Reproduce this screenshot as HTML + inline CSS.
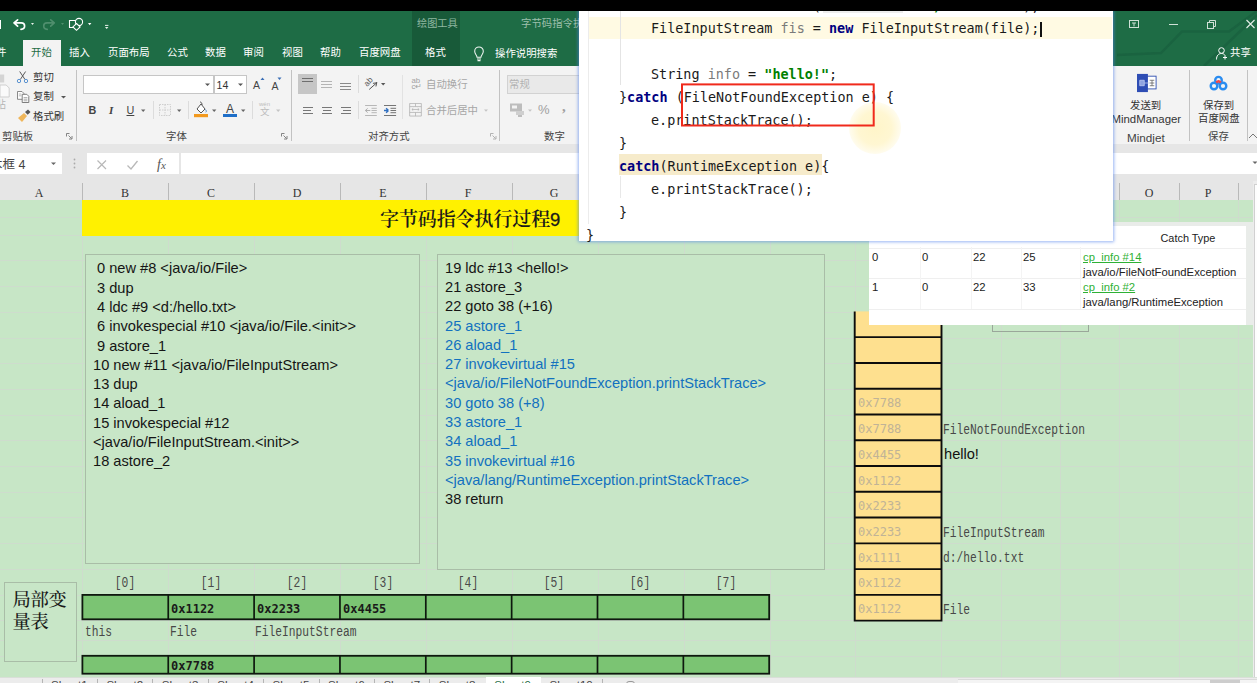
<!DOCTYPE html>
<html lang="zh">
<head>
<meta charset="utf-8">
<title>字节码指令执行过程9</title>
<style>
*{box-sizing:border-box;margin:0;padding:0}
html,body{width:1257px;height:683px;overflow:hidden;background:#c7e6c6}
body{position:relative;font-family:"Liberation Sans","Noto Sans CJK SC",sans-serif;font-size:10.5px;color:#222}
.abs{position:absolute}
.t{position:absolute;white-space:nowrap;line-height:1}
/* top */
#black{left:0;top:0;width:1257px;height:11px;background:#000}
#green{left:0;top:11px;width:1257px;height:55px;background:#1e6c45}
#toolctx{left:412px;top:11px;width:48px;height:55px;background:#185a39}
.tab{color:#fff;font-size:10.4px;top:48px}
#tabsel{left:23px;top:40px;width:38px;height:27px;background:#f3f3f3}
/* ribbon */
#ribbon{left:0;top:66px;width:1257px;height:78px;background:#f3f3f3}
.vsep{position:absolute;width:1px;background:#c2c2c2;top:70px;height:71px}
.rl{font-size:10.4px;color:#333}
.gl{font-size:10.4px;color:#444;top:132px}
.grey{color:#a6a6a6}
/* formula bar */
#fbar{left:0;top:144px;width:1257px;height:56px;background:#e6e6e6}
.wbox{position:absolute;background:#fff;top:153.3px;height:21px}
.colh{position:absolute;top:186.5px;font-family:"Liberation Serif","Noto Serif CJK SC",serif;font-size:12px;color:#333;line-height:1;width:20px;text-align:center}
.colsep{position:absolute;top:183px;height:17px;width:1px;background:#b9b9b9}
/* sheet */
#sheet{left:0;top:200px;width:1253px;height:478px;background:#c7e6c6;overflow:hidden}
.gv{position:absolute;top:0;width:1px;height:478px;background:#cedccd}
.gh{position:absolute;left:0;height:1px;width:1253px;background:#cedccd}
#yellow{left:82px;top:200px;width:1020px;height:35.500px;background:#fff100}
#title{left:380px;top:209.5px;font-family:"Liberation Serif","Noto Serif CJK SC",serif;font-weight:600;font-size:19px;color:#1a1a1a;letter-spacing:-0.1px}
.tbox{position:absolute;border:1px solid #a9bda7;background:#c8e6c7}
.code{position:absolute;font-family:"Liberation Sans",sans-serif;font-size:14.2px;line-height:19.3px;color:#151515;white-space:nowrap;transform-origin:0 0;transform:scaleX(1.03)}
.code .b{color:#1271bf}
.idx{position:absolute;top:575.800px;width:60px;margin-left:-10px;text-align:center;font-family:"Liberation Mono",monospace;font-size:14px;color:#4a4a4a;line-height:1;transform:scaleX(.81)}
.lv{position:absolute;background:#7bc473;border:2px solid #1d2b1c}
.hex{position:absolute;font-family:"DejaVu Sans Mono",monospace;font-weight:700;font-size:12px;color:#1a1a1a;line-height:1;white-space:nowrap}
.sun{position:absolute;font-family:"Liberation Mono",monospace;font-size:14px;color:#484848;line-height:1;white-space:nowrap;margin-top:-1.700px;margin-left:-.6px;transform-origin:0 0;transform:scaleX(.805)}
.stk{position:absolute;left:854px;width:88px;background:#fee08f;border:2px solid #111}
.shex{position:absolute;left:858px;font-family:"DejaVu Sans Mono",monospace;font-size:12px;color:#c0b397;line-height:1;white-space:nowrap}
/* popups */
#codepop{left:579px;top:11px;width:534px;height:230px;background:#fff;box-shadow:0 0 3px 1px rgba(80,130,235,.6);clip-path:inset(0 -8px -8px -8px)}
.cl{position:absolute;font-family:"DejaVu Sans Mono",monospace;font-size:13.45px;line-height:1;color:#1a1a1a;white-space:pre}
.kw{color:#000080;font-weight:700}
.str{color:#008000;font-weight:700}
.gr{color:#7a7a7a}
#expop{left:869px;top:222px;width:384px;height:103px;background:#e9ece9}
#exin{left:869px;top:226px;width:377px;height:98.500px;background:#fff}
.ex{position:absolute;font-family:"Liberation Sans",sans-serif;font-size:11.3px;color:#222;line-height:1;white-space:nowrap}
.lnk{color:#2eb135;text-decoration:underline}
#bottom{left:0;top:677px;width:1257px;height:6px;background:#ececec;border-top:1px solid #d9dfd8}
</style>
</head>
<body>
<div class="abs" id="black"></div>
<div class="abs" id="green"></div>
<div class="abs" id="toolctx"></div>
<!-- quick access toolbar -->
<div class="abs" style="left:0;top:19.500px;width:1px;height:9.500px;background:#fff"></div>
<svg class="abs" style="left:12px;top:15px" width="100" height="18" viewBox="0 0 100 18">
  <path d="M5.600 4.800 L2 7.900 L5.600 11.200 M2.400 7.900 H9.300 C13.600 7.900 13.900 14 9 14.400" fill="none" stroke="#fff" stroke-width="1.700" stroke-linecap="round" stroke-linejoin="round"/>
  <path d="M19 8 l3 0 l-1.5 2z" fill="#e8f0ea"/>
  <path d="M38.700 4.800 L42.300 7.900 L38.700 11.200 M41.900 7.900 H35 C30.700 7.900 30.400 14 35.300 14.400" fill="none" stroke="#4f8e6d" stroke-width="1.600" stroke-linecap="round" stroke-linejoin="round"/>
  <path d="M49 8 l3 0 l-1.5 2z" fill="#4f8e6d"/>
  <path d="M57.5 5.5 h9 v7 h-9z" fill="none" stroke="#fff" stroke-width="1.1"/>
  <circle cx="67" cy="7" r="3.6" fill="#1e6c45" stroke="#fff" stroke-width="1.1"/>
  <path d="M64.5 8.5 l3.6 3.4 l-3.6 3.4 l-3.6 -3.4z" fill="#1e6c45" stroke="#fff" stroke-width="1.1"/>
  <path d="M76 8 l3.4 0 l-1.7 2.2z" fill="#fff"/>
  <path d="M93 10.400 h3.400" stroke="#e8f0ea" stroke-width="1"/><path d="M93 12 h3.400 l-1.700 1.900z" fill="#e8f0ea"/>
</svg>
<span class="t" style="left:417px;top:19.400px;font-size:10.200px;color:#8fb7a1">绘图工具</span>
<span class="t" style="left:521px;top:19.4px;font-size:10.4px;color:#9dbfac">字节码指令执</span>
<!-- tabs -->
<div class="abs" id="tabsel"></div>
<span class="t tab" style="left:-14.5px">文件</span>
<span class="t tab" style="left:31px;color:#1e6c45">开始</span>
<span class="t tab" style="left:69px">插入</span>
<span class="t tab" style="left:108px">页面布局</span>
<span class="t tab" style="left:167px">公式</span>
<span class="t tab" style="left:205px">数据</span>
<span class="t tab" style="left:243px">审阅</span>
<span class="t tab" style="left:282px">视图</span>
<span class="t tab" style="left:320px">帮助</span>
<span class="t tab" style="left:359px">百度网盘</span>
<span class="t tab" style="left:425px">格式</span>
<svg class="abs" style="left:472.300px;top:44.800px" width="14" height="18" viewBox="0 0 14 18">
  <path d="M5 12.300 C5 10 2.700 9.300 2.700 6.200 a4.300 4.300 0 0 1 8.600 0 C11.300 9.300 9 10 9 12.300 z M5 14 h4 M5.500 15.600 h3" fill="none" stroke="#f2f7f4" stroke-width="1.050" stroke-linejoin="round"/>
</svg>
<span class="t tab" style="left:495px;top:49.300px">操作说明搜索</span>
<!-- window controls -->
<svg class="abs" style="left:1112px;top:11px" width="145" height="55" viewBox="0 0 145 55">
  <path d="M5 44 L49 42 L70 20.500 L117 20.500 L145 0" fill="none" stroke="#1a6340" stroke-width="2.500"/>
  <path d="M92 55 L145 4" fill="none" stroke="#1a6340" stroke-width="2.500"/>
  <rect x="17.500" y="9.500" width="9" height="7" fill="none" stroke="#cfe0d6" stroke-width="1"/>
  <path d="M20 12 h4 M22 12 v3.400" stroke="#cfe0d6" stroke-width="1"/>
  <path d="M57 13.500 h9" stroke="#cfe0d6" stroke-width="1"/>
  <rect x="95.500" y="11.500" width="6" height="6" fill="none" stroke="#cfe0d6" stroke-width="1"/>
  <path d="M97.500 11.500 v-2 h6 v6 h-2" fill="none" stroke="#cfe0d6" stroke-width="1"/>
  <path d="M134.500 9 l8 8 M142.500 9 l-8 8" stroke="#e6efe9" stroke-width="1.100"/>
  <circle cx="109.500" cy="39.500" r="2.800" fill="none" stroke="#fff" stroke-width="1"/>
  <path d="M104.500 48.500 c0 -4 2 -6 5 -6 c2 0 3 1 3.600 2 M111 46.500 h4 M113 44.500 v4" fill="none" stroke="#fff" stroke-width="1"/>
</svg>
<span class="t" style="left:1230px;top:48px;font-size:10.4px;color:#fff">共享</span>

<div class="abs" id="ribbon"></div>
<!-- clipboard group -->
<svg class="abs" style="left:0;top:70px" width="32" height="60" viewBox="0 0 32 60">
  <path d="M0 4.500 h4.200 v8 h-4.200z" fill="#d4d4d4"/>
  <path d="M0 15 h6.200 l3 3 v9 h-9.200z" fill="#fafafa" stroke="#cfcfcf" stroke-width="1"/>
</svg>
<span class="t rl" style="left:-15px;top:100px;color:#b5b5b5">粘贴</span>
<svg class="abs" style="left:15px;top:70px" width="16" height="16" viewBox="0 0 16 16">
  <path d="M4.700 1.500 L10 9.500 M10.600 1.500 L5.300 9.500" stroke="#5a5a5a" stroke-width="1" fill="none"/>
  <circle cx="4" cy="11" r="1.700" fill="none" stroke="#5b93d0" stroke-width="1"/>
  <circle cx="11" cy="11" r="1.700" fill="none" stroke="#5b93d0" stroke-width="1"/>
</svg>
<span class="t rl" style="left:33px;top:73.4px">剪切</span>
<svg class="abs" style="left:16px;top:89px" width="16" height="16" viewBox="0 0 16 16">
  <path d="M1.500 2.500 h4.500 l1.800 1.800 v6 h-6.300z" fill="#fff" stroke="#7d7d7d" stroke-width=".9"/>
  <path d="M2.800 5 h2.500 M2.800 6.800 h2.500" stroke="#9a9a9a" stroke-width=".7"/>
  <path d="M6.200 5.300 h4.600 l2 2 v6.200 h-6.600z" fill="#fff" stroke="#6f6f6f" stroke-width=".9"/>
  <path d="M7.600 8.600 h3.800 M7.600 10.200 h3.800 M7.600 11.800 h3.800" stroke="#8a8a8a" stroke-width=".7"/>
</svg>
<span class="t rl" style="left:33px;top:92.4px">复制</span>
<svg class="abs" style="left:60px;top:95px" width="8" height="5"><path d="M1 1 h5 l-2.5 2.6z" fill="#555"/></svg>
<svg class="abs" style="left:17px;top:109px" width="16" height="16" viewBox="0 0 16 16">
  <path d="M1 9 l6 -5 l3 3 l-5 6z" fill="#efb65a"/>
  <path d="M8 3 l3 -2.5 l2.5 2.5 l-2.8 2.8z" fill="#555"/>
</svg>
<span class="t rl" style="left:33px;top:112.4px">格式刷</span>
<span class="t gl" style="left:2px">剪贴板</span>
<svg class="abs" style="left:66px;top:133px" width="7" height="7"><path d="M.5 .5 h3 M.5 .5 v3 M6 3 v3 h-3 M2.5 2.5 l3 3" stroke="#777" stroke-width=".9" fill="none"/></svg>
<div class="vsep" style="left:76px"></div>
<!-- font group -->
<div class="abs" style="left:83px;top:75px;width:131px;height:19px;background:#fff;border:1px solid #c6c6c6"></div>
<div class="abs" style="left:214px;top:75px;width:33px;height:19px;background:#fff;border:1px solid #c6c6c6"></div>
<svg class="abs" style="left:204px;top:83px" width="8" height="5"><path d="M1 .5 h5 l-2.5 2.6z" fill="#555"/></svg>
<span class="t" style="left:216.5px;top:79.5px;font-size:10.6px;color:#333">14</span>
<svg class="abs" style="left:237px;top:83px" width="8" height="5"><path d="M1 .5 h5 l-2.5 2.6z" fill="#555"/></svg>
<span class="t" style="left:253px;top:80px;font-size:10.5px;color:#444">A</span>
<svg class="abs" style="left:260px;top:77px" width="6" height="4"><path d="M.5 3 l2 -2.4 l2 2.4z" fill="#3b6fb6"/></svg>
<span class="t" style="left:271.5px;top:80.5px;font-size:10.5px;color:#444">A</span>
<svg class="abs" style="left:277px;top:77px" width="6" height="4"><path d="M.5 .6 l2 2.4 l2 -2.4z" fill="#3b6fb6"/></svg>
<span class="t" style="left:88.500px;top:105px;font-size:10.800px;font-weight:700;color:#444">B</span>
<span class="t" style="left:109px;top:105px;font-size:11px;font-style:italic;font-family:'Liberation Serif',serif;font-weight:700;color:#444">I</span>
<span class="t" style="left:126.500px;top:105px;font-size:10.800px;text-decoration:underline;color:#444">U</span>
<svg class="abs" style="left:140px;top:109px" width="8" height="5"><path d="M1 .5 h4.4 l-2.2 2.4z" fill="#666"/></svg>
<div class="vsep" style="left:153px;top:101px;height:18px;background:#dcdcdc"></div>
<svg class="abs" style="left:158px;top:103px" width="14" height="14" viewBox="0 0 14 14"><path d="M1.5 1.5 h11 v11 h-11z M7 1.5 v11 M1.5 7 h11" fill="none" stroke="#cfcfcf" stroke-width="1" stroke-dasharray="1.5 1"/></svg>
<svg class="abs" style="left:176px;top:109px" width="8" height="5"><path d="M1 .5 h4.4 l-2.2 2.4z" fill="#666"/></svg>
<div class="vsep" style="left:188px;top:101px;height:18px;background:#dcdcdc"></div>
<svg class="abs" style="left:193px;top:101px" width="16" height="18" viewBox="0 0 16 18">
  <path d="M4 8 l4 -5 l4 5 l-4 4z" fill="#fff" stroke="#555" stroke-width="1"/>
  <path d="M7 1 c1.5 0 2 1.2 2 3" fill="none" stroke="#555" stroke-width="1"/>
  <path d="M12.5 8.5 c.8 1.2 1.2 2 .3 2.8" fill="none" stroke="#4a86c5" stroke-width="1"/>
  <rect x="1" y="13" width="14" height="3.2" fill="#f39a1f"/>
</svg>
<svg class="abs" style="left:211px;top:109px" width="8" height="5"><path d="M1 .5 h4.4 l-2.2 2.4z" fill="#666"/></svg>
<span class="t" style="left:226px;top:102.5px;font-size:12px;color:#444">A</span>
<div class="abs" style="left:223px;top:114px;width:14px;height:3px;background:#1f6fc8"></div>
<svg class="abs" style="left:240px;top:109px" width="8" height="5"><path d="M1 .5 h4.4 l-2.2 2.4z" fill="#666"/></svg>
<div class="vsep" style="left:252px;top:101px;height:18px;background:#dcdcdc"></div>
<span class="t" style="left:259px;top:101px;font-size:6px;color:#bcbcbc">wén</span>
<span class="t" style="left:260px;top:107px;font-size:9.5px;color:#bcbcbc">文</span>
<svg class="abs" style="left:275px;top:109px" width="8" height="5"><path d="M1 .5 h4.4 l-2.2 2.4z" fill="#c4c4c4"/></svg>
<span class="t gl" style="left:166px">字体</span>
<svg class="abs" style="left:281px;top:133px" width="7" height="7"><path d="M.5 .5 h3 M.5 .5 v3 M6 3 v3 h-3 M2.5 2.5 l3 3" stroke="#777" stroke-width=".9" fill="none"/></svg>
<div class="vsep" style="left:291px"></div>
<!-- alignment group -->
<div class="abs" style="left:298px;top:74px;width:19px;height:20px;background:#c6c6c6"></div>
<svg class="abs" style="left:298px;top:74px" width="70" height="46" viewBox="0 0 70 46">
  <path d="M4 4.500 h11 M4 7.500 h11" stroke="#6e6e6e" stroke-width="1"/>
  <path d="M23 7.500 h11 M23 10.500 h11 M23 13.500 h11" stroke="#b4b4b4" stroke-width="1"/>
  <path d="M42 9.500 h11 M42 12.500 h11 M42 15.500 h11" stroke="#8a8a8a" stroke-width="1"/>
  <path d="M5 33.500 h10 M5 36.500 h8 M5 39.500 h10" stroke="#777" stroke-width="1"/>
  <path d="M24 33.500 h10 M25 36.500 h8 M24 39.500 h10" stroke="#777" stroke-width="1"/>
  <path d="M43 33.500 h10 M45 36.500 h8 M43 39.500 h10" stroke="#777" stroke-width="1"/>
</svg>
<div class="vsep" style="left:358px;top:75px;height:18px;background:#dcdcdc"></div>
<div class="vsep" style="left:358px;top:101px;height:18px;background:#dcdcdc"></div>
<svg class="abs" style="left:363px;top:76px" width="26" height="16" viewBox="0 0 26 16">
  <text x="5.700" y="6.100" font-size="8.200" font-family="Liberation Sans,sans-serif" fill="#555" text-anchor="middle" dominant-baseline="middle" transform="rotate(-47 5.700 6.100)">ab</text>
  <path d="M6.500 13.200 L13.700 6.800 M13.700 6.800 l-3.400 .5 M13.700 6.800 l-.7 3.300" stroke="#555" stroke-width="1" fill="none" stroke-linecap="round"/>
  <path d="M18 7 h4.400 l-2.200 2.400z" fill="#555"/>
</svg>
<svg class="abs" style="left:364px;top:102px" width="36" height="16" viewBox="0 0 36 16">
  <path d="M1.100 3.500 h11.700 M7.500 6.300 h5.300 M7.500 8.500 h5.300 M7.500 10.700 h5.300 M1.100 13.500 h11.700" stroke="#b0b0b0" stroke-width=".9"/>
  <path d="M6.300 8.500 h-5 M1.300 8.500 l2.400 -2.100 M1.300 8.500 l2.400 2.100" stroke="#b0b0b0" stroke-width="1" fill="none"/>
  <path d="M20 3.500 h12.100 M26.500 6.300 h5.600 M26.500 8.500 h5.600 M26.500 10.700 h5.600 M20 13.500 h12.100" stroke="#666" stroke-width=".9"/>
  <path d="M20 8.500 h4.300 M24.500 8.500 l-2.400 -2.200 M24.500 8.500 l-2.400 2.200" stroke="#2f6fc0" stroke-width="1.400" fill="none"/>
</svg>
<div class="vsep" style="left:402px;top:75px;height:44px;background:#e2e2e2"></div>
<span class="t" style="left:411.500px;top:77.400px;font-size:7.800px;color:#a2a2a2">ab</span>
<span class="t" style="left:411.500px;top:83.200px;font-size:7.800px;color:#a2a2a2">c↵</span>
<span class="t rl grey" style="left:426px;top:80.4px">自动换行</span>
<svg class="abs" style="left:409px;top:103.300px" width="13" height="13.500" viewBox="0 0 14 15"><path d="M.5 .5 h13 v14 h-13z M.5 4 h13 M.5 10.500 h13 M7 .500 v3.500 M7 10.500 v4 M3 7.200 h8 M3 7.200 l1.500 -1.300 M3 7.200 l1.500 1.300 M11 7.200 l-1.500 -1.300 M11 7.200 l-1.500 1.300" fill="none" stroke="#b4b4b4" stroke-width=".9"/></svg>
<span class="t rl grey" style="left:426px;top:106.4px">合并后居中</span>
<svg class="abs" style="left:483px;top:109px" width="8" height="5"><path d="M1 .5 h4 l-2 2.200z" fill="#c4c4c4"/></svg>
<span class="t gl" style="left:368px">对齐方式</span>
<svg class="abs" style="left:490px;top:133px" width="7" height="7"><path d="M.5 .5 h3 M.5 .5 v3 M6 3 v3 h-3 M2.500 2.500 l3 3" stroke="#aaa" stroke-width=".9" fill="none"/></svg>
<div class="vsep" style="left:499px"></div>
<!-- number group -->
<div class="abs" style="left:507px;top:75px;width:80px;height:19px;background:#e9e9e9;border:1px solid #d2d2d2"></div>
<span class="t rl" style="left:509px;top:80.4px;color:#b2b2b2">常规</span>
<svg class="abs" style="left:509px;top:102px" width="18" height="16" viewBox="0 0 18 16"><rect x="1" y="1.500" width="12" height="8" fill="#bdbdbd"/><rect x="3" y="3.500" width="5" height="3" fill="#f3f3f3"/><path d="M7 9 h8 v4 h-8z" fill="#cfcfcf"/><path d="M9 13 h4 v2 h-4z" fill="#bdbdbd"/></svg>
<svg class="abs" style="left:527px;top:109px" width="8" height="5"><path d="M1 .5 h4 l-2 2.200z" fill="#c4c4c4"/></svg>
<span class="t" style="left:538px;top:103px;font-size:13px;color:#a0a0a0">%</span>
<span class="t" style="left:562px;top:98.500px;font-size:15px;font-weight:700;color:#a0a0a0;font-family:'Liberation Serif',serif">,</span>
<span class="t gl" style="left:544px">数字</span>
<!-- right side groups -->
<svg class="abs" style="left:1136px;top:72.500px" width="22" height="20" viewBox="0 0 24 22">
  <rect x="10" y="3.500" width="12" height="14" fill="#fff" stroke="#2f4fb0" stroke-width="1"/>
  <rect x="1" y="1" width="12" height="20" fill="#2e4db4"/>
  <path d="M4 8 h5 v6 h-5z M9 11 h6" fill="#8fa3e0" stroke="#c7d1f3" stroke-width=".8"/>
  <path d="M15 8 h5 M15 11 h5 M17.500 8 v6 M15 14 h5" stroke="#555" stroke-width=".8" fill="none"/>
</svg>
<span class="t rl" style="left:1130px;top:101.4px">发送到</span>
<span class="t rl" style="left:1111.500px;top:114.200px;font-size:11.400px">MindManager</span>
<span class="t gl" style="left:1127px;font-size:11.700px">Mindjet</span>
<div class="vsep" style="left:1189px"></div>
<svg class="abs" style="left:1207px;top:73px" width="24" height="20" viewBox="0 0 24 20">
  <circle cx="11.500" cy="7.200" r="3.300" fill="none" stroke="#2a8cf0" stroke-width="2.400"/>
  <circle cx="7" cy="13" r="3.300" fill="none" stroke="#2a8cf0" stroke-width="2.400"/>
  <circle cx="16" cy="13" r="3.300" fill="none" stroke="#2a8cf0" stroke-width="2.400"/>
  <path d="M9.300 9.600 q2.200 -2.600 4.400 0" fill="none" stroke="#ef4a4a" stroke-width="2.600"/>
</svg>
<span class="t rl" style="left:1203px;top:101.4px">保存到</span>
<span class="t rl" style="left:1198px;top:114.4px">百度网盘</span>
<span class="t gl" style="left:1208px">保存</span>
<div class="vsep" style="left:1247px"></div>
<svg class="abs" style="left:1248px;top:130px" width="9" height="9"><path d="M1 8 l4 -4 l4 4" fill="none" stroke="#777" stroke-width="1"/></svg>

<div class="abs" id="fbar"></div>
<div class="wbox" style="left:0;width:62px"></div>
<span class="t" style="left:-10px;top:158.500px;font-size:12.500px;color:#444">本框 4</span>
<svg class="abs" style="left:50px;top:162px" width="8" height="5"><path d="M1 .5 h5 l-2.5 2.600z" fill="#666"/></svg>
<svg class="abs" style="left:73px;top:158px" width="3" height="12"><circle cx="1.500" cy="1.500" r=".9" fill="#aaa"/><circle cx="1.500" cy="5.500" r=".9" fill="#aaa"/><circle cx="1.500" cy="9.500" r=".9" fill="#aaa"/></svg>
<div class="wbox" style="left:87px;width:92px"></div>
<svg class="abs" style="left:96px;top:159px" width="12" height="12"><path d="M1.500 1.500 l8.500 8.500 M10 1.500 l-8.500 8.500" stroke="#b8b8b8" stroke-width="1.200"/></svg>
<svg class="abs" style="left:126px;top:159px" width="13" height="12"><path d="M1.500 6.500 l3.500 3.500 l6.500 -8" fill="none" stroke="#b8b8b8" stroke-width="1.300"/></svg>
<span class="t" style="left:157px;top:157.500px;font-size:14px;font-style:italic;font-family:'Liberation Serif',serif;color:#555">f<span style="font-size:11px">x</span></span>
<div class="wbox" style="left:181px;width:1076px"></div>
<svg class="abs" style="left:1252px;top:161px" width="6" height="5"><path d="M.5 .5 h5 l-2.500 2.600z" fill="#666"/></svg>
<div class="colsep" style="left:82px"></div>
<div class="colsep" style="left:168px"></div>
<div class="colsep" style="left:254px"></div>
<div class="colsep" style="left:340px"></div>
<div class="colsep" style="left:426px"></div>
<div class="colsep" style="left:512px"></div>
<div class="colsep" style="left:1119px"></div>
<div class="colsep" style="left:1179px"></div>
<div class="colsep" style="left:1238px"></div>
<span class="colh" style="left:29px">A</span>
<span class="colh" style="left:115px">B</span>
<span class="colh" style="left:201px">C</span>
<span class="colh" style="left:287px">D</span>
<span class="colh" style="left:373px">E</span>
<span class="colh" style="left:458px">F</span>
<span class="colh" style="left:544px">G</span>
<span class="colh" style="left:1139px">O</span>
<span class="colh" style="left:1198px">P</span>
<div class="abs" style="left:1253px;top:181px;width:4px;height:496px;background:#ececec"></div>
<div class="abs" style="left:1254px;top:184px;width:3px;height:493px;background:#fdfdfd;border-left:1px solid #d0d0d0;border-top:1px solid #d0d0d0"></div>

<div class="abs" id="sheet">
<div class="gv" style="left:82px"></div>
<div class="gv" style="left:168px"></div>
<div class="gv" style="left:254px"></div>
<div class="gv" style="left:340px"></div>
<div class="gv" style="left:426px"></div>
<div class="gv" style="left:512px"></div>
<div class="gv" style="left:598px"></div>
<div class="gv" style="left:684px"></div>
<div class="gv" style="left:770px"></div>
<div class="gv" style="left:855px"></div>
<div class="gv" style="left:941px"></div>
<div class="gv" style="left:1001px"></div>
<div class="gv" style="left:1060px"></div>
<div class="gv" style="left:1119px"></div>
<div class="gv" style="left:1179px"></div>
<div class="gv" style="left:1238px"></div>
<div class="gh" style="top:17.0px"></div>
<div class="gh" style="top:34.7px"></div>
<div class="gh" style="top:60.4px"></div>
<div class="gh" style="top:86.1px"></div>
<div class="gh" style="top:111.8px"></div>
<div class="gh" style="top:137.5px"></div>
<div class="gh" style="top:163.2px"></div>
<div class="gh" style="top:188.9px"></div>
<div class="gh" style="top:214.6px"></div>
<div class="gh" style="top:240.3px"></div>
<div class="gh" style="top:266.0px"></div>
<div class="gh" style="top:291.7px"></div>
<div class="gh" style="top:317.4px"></div>
<div class="gh" style="top:343.1px"></div>
<div class="gh" style="top:368.8px"></div>
<div class="gh" style="top:394.5px"></div>
<div class="gh" style="top:420.2px"></div>
<div class="gh" style="top:439.500px"></div>
<div class="gh" style="top:456.300px"></div>
</div>
<div class="abs" id="yellow"></div>
<span class="t" id="title">字节码指令执行过程<span style="font-family:'Liberation Sans',sans-serif;font-weight:400;font-size:18.500px;-webkit-text-stroke:.3px #1a1a1a">9</span></span>
<div class="tbox" style="left:85px;top:254px;width:335px;height:310px"></div>
<div class="code" style="left:97px;top:259.3px">0 new #8 &lt;java/io/File&gt;</div>
<div class="code" style="left:97px;top:278.6px">3 dup</div>
<div class="code" style="left:97px;top:297.9px">4 ldc #9 &lt;d:/hello.txt&gt;</div>
<div class="code" style="left:97px;top:317.2px">6 invokespecial #10 &lt;java/io/File.&lt;init&gt;&gt;</div>
<div class="code" style="left:97px;top:336.5px">9 astore_1</div>
<div class="code" style="left:93px;top:355.8px">10 new #11 &lt;java/io/FileInputStream&gt;</div>
<div class="code" style="left:93px;top:375.1px">13 dup</div>
<div class="code" style="left:93px;top:394.4px">14 aload_1</div>
<div class="code" style="left:93px;top:413.7px">15 invokespecial #12</div>
<div class="code" style="left:93px;top:433.0px">&lt;java/io/FileInputStream.&lt;init&gt;&gt;</div>
<div class="code" style="left:93px;top:452.3px">18 astore_2</div>
<div class="tbox" style="left:437px;top:254px;width:388px;height:316px"></div>
<div class="code" style="left:445px;top:258.8px">19 ldc #13 &lt;hello!&gt;</div>
<div class="code" style="left:445px;top:278.1px">21 astore_3</div>
<div class="code" style="left:445px;top:297.3px">22 goto 38 (+16)</div>
<div class="code" style="color:#1271bf;left:445px;top:316.6px">25 astore_1</div>
<div class="code" style="color:#1271bf;left:445px;top:335.9px">26 aload_1</div>
<div class="code" style="color:#1271bf;left:445px;top:355.2px">27 invokevirtual #15</div>
<div class="code" style="color:#1271bf;left:445px;top:374.4px">&lt;java/io/FileNotFoundException.printStackTrace&gt;</div>
<div class="code" style="color:#1271bf;left:445px;top:393.7px">30 goto 38 (+8)</div>
<div class="code" style="color:#1271bf;left:445px;top:413.0px">33 astore_1</div>
<div class="code" style="color:#1271bf;left:445px;top:432.2px">34 aload_1</div>
<div class="code" style="color:#1271bf;left:445px;top:451.5px">35 invokevirtual #16</div>
<div class="code" style="color:#1271bf;left:445px;top:470.8px">&lt;java/lang/RuntimeException.printStackTrace&gt;</div>
<div class="code" style="left:445px;top:490.0px">38 return</div>
<span class="idx" style="left:105px">[0]</span>
<span class="idx" style="left:191px">[1]</span>
<span class="idx" style="left:277px">[2]</span>
<span class="idx" style="left:363px">[3]</span>
<span class="idx" style="left:448px">[4]</span>
<span class="idx" style="left:534px">[5]</span>
<span class="idx" style="left:620px">[6]</span>
<span class="idx" style="left:706px">[7]</span>
<svg class="abs" style="left:0;top:0" width="1257" height="683" viewBox="0 0 1257 683">
<rect x="82.4" y="594.9" width="686.80" height="24.4" fill="#7bc473" stroke="#0e180e" stroke-width="1.8"/>
<path d="M168.25 594.9 V619.3 M254.10 594.9 V619.3 M339.95 594.9 V619.3 M425.80 594.9 V619.3 M511.65 594.9 V619.3 M597.50 594.9 V619.3 M683.35 594.9 V619.3" stroke="#0e180e" stroke-width="1.7" fill="none"/>
<rect x="82.4" y="655.8" width="686.80" height="17.9" fill="#7bc473" stroke="#0e180e" stroke-width="1.8"/>
<path d="M168.25 655.8 V673.7 M254.10 655.8 V673.7 M339.95 655.8 V673.7 M425.80 655.8 V673.7 M511.65 655.8 V673.7 M597.50 655.8 V673.7 M683.35 655.8 V673.7" stroke="#0e180e" stroke-width="1.7" fill="none"/>
<rect x="854.7" y="311.4" width="86.8" height="309.24" fill="#fee08f"/>
<path d="M854.7 311.4 V620.64 H941.5 V311.4" fill="none" stroke="#0c0c0c" stroke-width="1.9" stroke-linejoin="miter"/>
<path d="M854.7 337.17 H941.5 M854.7 362.94 H941.5 M854.7 388.71 H941.5 M854.7 414.48 H941.5 M854.7 440.25 H941.5 M854.7 466.02 H941.5 M854.7 491.79 H941.5 M854.7 517.56 H941.5 M854.7 543.33 H941.5 M854.7 569.10 H941.5 M854.7 594.87 H941.5" stroke="#0c0c0c" stroke-width="1.9" fill="none"/>
</svg>
<span class="hex" style="left:171px;top:602.6px">0x1122</span>
<span class="hex" style="left:257px;top:602.6px">0x2233</span>
<span class="hex" style="left:343px;top:602.6px">0x4455</span>
<span class="hex" style="left:171px;top:660px">0x7788</span>
<span class="sun" style="left:86px;top:626.5px">this</span>
<span class="sun" style="left:171px;top:626.5px">File</span>
<span class="sun" style="left:256px;top:626.5px">FileInputStream</span>
<div class="abs" style="left:4px;top:582px;width:73px;height:80px;border:1px solid #a9bda7;background:#c8e6c7"></div>
<div class="abs" style="left:12.500px;top:588.500px;font-family:'Liberation Serif','Noto Serif CJK SC',serif;font-weight:500;font-size:18.300px;line-height:22.500px;color:#1a1a1a;width:60px;letter-spacing:-.3px">局部变量表</div>
<span class="shex" style="top:397.4px">0x7788</span>
<span class="shex" style="top:423.1px">0x7788</span>
<span class="shex" style="top:448.8px">0x4455</span>
<span class="shex" style="top:474.5px">0x1122</span>
<span class="shex" style="top:500.2px">0x2233</span>
<span class="shex" style="top:525.9px">0x2233</span>
<span class="shex" style="top:551.6px">0x1111</span>
<span class="shex" style="top:577.3px">0x1122</span>
<span class="shex" style="top:603.0px">0x1122</span>
<span class="sun" style="left:944px;top:424.6px">FileNotFoundException</span>
<span class="sun" style="left:944px;top:527.4px">FileInputStream</span>
<span class="sun" style="left:944px;top:553.1px">d:/hello.txt</span>
<span class="sun" style="left:944px;top:604.5px">File</span>
<span class="t" style="left:944px;top:447.0px;font-size:14.200px;color:#111;font-family:'Liberation Sans',sans-serif;transform-origin:0 0;transform:scaleX(1.03)">hello!</span>
<div class="abs" style="left:992px;top:300px;width:97px;height:32px;border:1px solid #9aa79a"></div>

<div class="abs" id="expop"></div>
<div class="abs" id="exin"></div>
<div class="abs" style="left:869px;top:247.5px;width:377px;height:1px;background:#efefef"></div>
<div class="abs" style="left:869px;top:278px;width:377px;height:1px;background:#efefef"></div>
<div class="abs" style="left:869px;top:308.5px;width:377px;height:1px;background:#efefef"></div>
<div class="abs" style="left:920px;top:247px;width:1px;height:62px;background:#f4f4f4"></div>
<div class="abs" style="left:971px;top:247px;width:1px;height:62px;background:#f4f4f4"></div>
<div class="abs" style="left:1021px;top:247px;width:1px;height:62px;background:#f4f4f4"></div>
<div class="abs" style="left:1080px;top:247px;width:1px;height:62px;background:#f4f4f4"></div>
<span class="ex" style="left:1160.500px;top:232.800px;font-size:10.900px">Catch Type</span>
<span class="ex" style="left:872px;top:252px">0</span>
<span class="ex" style="left:922px;top:252px">0</span>
<span class="ex" style="left:973px;top:252px">22</span>
<span class="ex" style="left:1023px;top:252px">25</span>
<span class="ex lnk" style="left:1083px;top:252px">cp_info #14</span>
<span class="ex" style="left:1083px;top:267px">java/io/FileNotFoundException</span>
<span class="ex" style="left:872px;top:282px">1</span>
<span class="ex" style="left:922px;top:282px">0</span>
<span class="ex" style="left:973px;top:282px">22</span>
<span class="ex" style="left:1023px;top:282px">33</span>
<span class="ex lnk" style="left:1083px;top:282px">cp_info #2</span>
<span class="ex" style="left:1083px;top:297px">java/lang/RuntimeException</span>

<div class="abs" id="codepop"></div>
<div class="abs" style="left:588px;top:17px;width:524px;height:22px;background:#fffae3"></div>
<div class="abs" style="left:588px;top:11px;width:1px;height:213px;background:#ececec"></div>
<div class="abs" style="left:620px;top:11px;width:1px;height:74px;background:#e4e4e4"></div>
<div class="abs" style="left:620px;top:176px;width:1px;height:22px;background:#e8e8e8"></div>
<div class="abs" style="left:619px;top:154px;width:203px;height:21px;background:#f6ebcb"></div>
<div class="abs" style="left:849px;top:102px;width:52px;height:52px;border-radius:50%;background:radial-gradient(circle,rgba(255,240,175,.68) 0%,rgba(255,241,180,.6) 45%,rgba(255,243,190,.3) 68%,rgba(255,245,200,0) 88%)"></div>
<div class="abs" style="left:579px;top:11px;width:533px;height:3.500px;overflow:hidden"><div class="abs" style="left:244px;top:0;width:80px;height:2px;background:#ededed"></div><div class="cl" style="left:72px;top:-10.700px">File file = <span class="kw">new</span> File(</div><div class="cl" style="left:251px;top:-10.700px;font-size:11px;color:#8a8a8a">pathname:</div><div class="cl" style="left:331px;top:-10.700px"><span class="str">"d:/hello.txt"</span>);</div></div>
<div class="cl" style="left:651px;top:22.4px">FileInputStream <span class="gr">fis</span> = <span class="kw">new</span> FileInputStream(file);</div>
<div class="abs" style="left:1040px;top:22px;width:1.500px;height:15px;background:#111"></div>
<div class="cl" style="left:651px;top:68.4px">String <span class="gr">info</span> = <span class="str">"hello!"</span>;</div>
<div class="cl" style="left:619px;top:91.4px">}<span class="kw">catch</span> (FileNotFoundException e) {</div>
<div class="cl" style="left:651px;top:114.4px">e.printStackTrace();</div>
<div class="cl" style="left:619px;top:137.3px">}</div>
<div class="cl" style="left:619px;top:159.8px"><span class="kw">catch</span>(RuntimeException e){</div>
<div class="cl" style="left:651px;top:183.1px">e.printStackTrace();</div>
<div class="cl" style="left:619px;top:205.6px">}</div>
<div class="cl" style="left:586px;top:228.6px">}</div>
<svg class="abs" style="left:670px;top:75px" width="220" height="60" viewBox="670 75 220 60"><rect x="682" y="84.400" width="191.700" height="41.100" fill="none" stroke="#f02a1c" stroke-width="2"/></svg>
<div class="abs" id="bottom"></div>
<div class="abs" style="left:486px;top:677px;width:55px;height:6px;background:#fff"></div>
<span class="t" style="left:51.0px;top:678.6px;font-size:11.6px;color:#444">Sheet1</span>
<span class="t" style="left:106.4px;top:678.6px;font-size:11.6px;color:#444">Sheet2</span>
<span class="t" style="left:161.8px;top:678.6px;font-size:11.6px;color:#444">Sheet3</span>
<span class="t" style="left:217.2px;top:678.6px;font-size:11.6px;color:#444">Sheet4</span>
<span class="t" style="left:272.6px;top:678.6px;font-size:11.6px;color:#444">Sheet5</span>
<span class="t" style="left:328.0px;top:678.6px;font-size:11.6px;color:#444">Sheet6</span>
<span class="t" style="left:383.4px;top:678.6px;font-size:11.6px;color:#444">Sheet7</span>
<span class="t" style="left:438.8px;top:678.6px;font-size:11.6px;color:#444">Sheet8</span>
<span class="t" style="left:494.2px;top:678.6px;font-size:11.6px;color:#1e6c45">Sheet9</span>
<span class="t" style="left:549.6px;top:678.6px;font-size:11.6px;color:#444">Sheet10</span>
<div class="abs" style="left:41.5px;top:679px;width:1px;height:4px;background:#b5b5b5"></div>
<div class="abs" style="left:96.9px;top:679px;width:1px;height:4px;background:#b5b5b5"></div>
<div class="abs" style="left:152.3px;top:679px;width:1px;height:4px;background:#b5b5b5"></div>
<div class="abs" style="left:207.7px;top:679px;width:1px;height:4px;background:#b5b5b5"></div>
<div class="abs" style="left:263.1px;top:679px;width:1px;height:4px;background:#b5b5b5"></div>
<div class="abs" style="left:318.5px;top:679px;width:1px;height:4px;background:#b5b5b5"></div>
<div class="abs" style="left:373.9px;top:679px;width:1px;height:4px;background:#b5b5b5"></div>
<div class="abs" style="left:429.3px;top:679px;width:1px;height:4px;background:#b5b5b5"></div>
<div class="abs" style="left:602px;top:679px;width:1px;height:4px;background:#b5b5b5"></div>
<div class="abs" style="left:626px;top:681px;width:9px;height:6px;border:1px solid #999;border-radius:5px"></div>
<div class="abs" style="left:958px;top:679px;width:299px;height:4px;background:#f4f4f4;border-top:1px solid #dadada"></div>
<div class="abs" style="left:1210px;top:680px;width:30px;height:3px;background:#cdcdcd"></div>
</body>
</html>
